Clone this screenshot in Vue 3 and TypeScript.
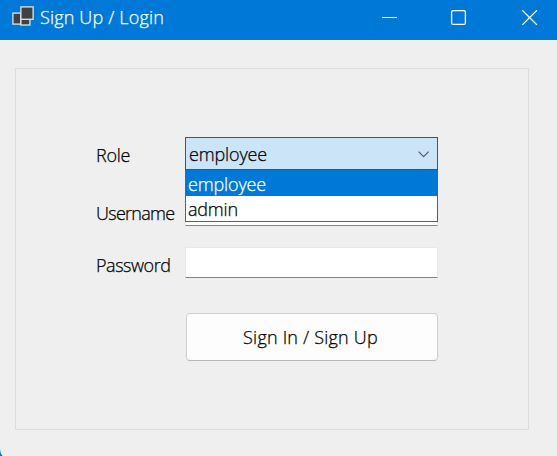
<script setup lang="ts">
import { ref } from 'vue'

const roles: string[] = ['employee', 'admin']
const role = ref<string>('employee')
const username = ref('')
const password = ref('')
</script>

<template>
  <div class="screen">
    <div class="window">
      <header class="titlebar">
        <svg class="app-icon" width="24" height="22" viewBox="0 0 24 22">
          <g fill="#414141" stroke="#e2e4e8" stroke-width="1.3">
            <rect x="1.9" y="8.1" width="8" height="11" />
            <rect x="9.9" y="12.6" width="9" height="7.4" />
            <rect x="9.9" y="1.9" width="12.2" height="12.4" />
          </g>
        </svg>
        <h1 class="title"><span class="fit t-title">Sign Up / Login</span></h1>
        <svg class="controls" width="157" height="16" viewBox="0 0 157 16" fill="none" stroke="#fff">
          <path d="M0 7.5h15" />
          <rect x="69.6" y="0.6" width="13.8" height="13.8" rx="1.5" stroke-width="1.3" />
          <path d="M140.3.3l14.6 14.6M154.9.3l-14.6 14.6" stroke-width="1.3" />
        </svg>
      </header>

      <form class="panel" @submit.prevent>
        <div class="row role-row">
          <label class="label"><span class="fit t-role">Role</span></label>
          <div class="combo">
            <span class="fit t-employee">{{ role }}</span>
            <svg width="12" height="7" viewBox="0 0 12 7" fill="none" stroke="#4f5b66" stroke-width="1.2">
              <path d="M.6.6l5 5 5-5" />
            </svg>
            <ul class="options">
              <li v-for="item in roles" :key="item" :class="{ active: item === role }" @click="role = item">
                <span class="fit" :class="'t-' + item">{{ item }}</span>
              </li>
            </ul>
          </div>
        </div>
        <div class="row user-row">
          <label class="label" for="username"><span class="fit t-user">Username</span></label>
          <input id="username" v-model="username" class="input" type="text" />
        </div>
        <div class="row pass-row">
          <label class="label" for="password"><span class="fit t-pass">Password</span></label>
          <input id="password" v-model="password" class="input" type="password" />
        </div>
        <button class="submit" type="submit"><span class="fit t-btn">Sign In / Sign Up</span></button>
      </form>
    </div>
  </div>
</template>

<style>
body {
  margin: 0;
}
</style>

<style scoped>
.screen {
  width: 557px;
  height: 456px;
  overflow: hidden;
  background: #0078d7;
  font-family: "Open Sans", "Noto Sans", sans-serif;
  font-size: 18px;
  line-height: 24px;
  color: #000;
}
.window {
  height: 460px;
  overflow: hidden;
  background: #efefef;
  border-radius: 0 0 0 11px;
}
.titlebar {
  display: flex;
  box-sizing: border-box;
  height: 40px;
  padding: 5px 18px 0 11px;
  background: #0078d7;
  color: #fff;
}
.title {
  margin: 0 0 0 5px;
  font-size: 18px;
  font-weight: 400;
  white-space: nowrap;
}
.controls {
  margin: 5px 0 0 auto;
}
.panel {
  box-sizing: border-box;
  width: 514px;
  height: 362px;
  margin: 28px 0 0 15px;
  padding: 68px 90px 0 80px;
  border: 1px solid #dcdcdc;
}
.row {
  display: grid;
  grid-template-columns: 89px 253px;
}
.label {
  padding-top: 6px;
  white-space: nowrap;
}
.user-row {
  margin-top: 25px;
}
.pass-row {
  margin-top: 21px;
}
.fit {
  display: inline-block;
  font-weight: 300;
  -webkit-text-stroke: 0.25px currentColor;
}
.t-title {
  letter-spacing: 0.16px;
}
.t-role {
  letter-spacing: -0.3px;
}
.t-employee {
  letter-spacing: -0.14px;
}
.t-admin {
  letter-spacing: -0.2px;
}
.t-user {
  letter-spacing: -0.72px;
}
.t-pass {
  letter-spacing: -0.45px;
}
.t-btn {
  letter-spacing: 0.2px;
}
.combo {
  position: relative;
  display: flex;
  box-sizing: border-box;
  height: 33px;
  justify-content: space-between;
  padding: 4px 7px 0 3px;
  border: 1px solid #0067b8;
  background: #cce4f7;
}
.combo > svg {
  margin-top: 9px;
}
.options {
  position: absolute;
  z-index: 1;
  top: 32px;
  left: -1px;
  box-sizing: border-box;
  width: 253px;
  height: 52px;
  margin: 0;
  padding: 0;
  border: 1px solid #0078d7;
  background: #fff;
  line-height: 26px;
  list-style: none;
}
.options li {
  height: 25px;
  padding-left: 2px;
}
.options .active {
  background: #0078d7;
  color: #fff;
}
.input {
  box-sizing: border-box;
  width: 253px;
  height: 31px;
  margin: 0;
  padding: 0 4px;
  border: 1px solid #e8e8e8;
  border-bottom-color: #838383;
  border-radius: 1px;
  outline: none;
  background: #fff;
  font: inherit;
}
.submit {
  display: block;
  box-sizing: border-box;
  width: 252px;
  height: 48px;
  margin: 35px 0 0 90px;
  padding: 0 3px 0 0;
  border: 1px solid #d0d0d0;
  border-bottom-color: #b8b8b8;
  border-radius: 4px;
  background: #fdfdfd;
  color: #000;
  font: inherit;
}
</style>
